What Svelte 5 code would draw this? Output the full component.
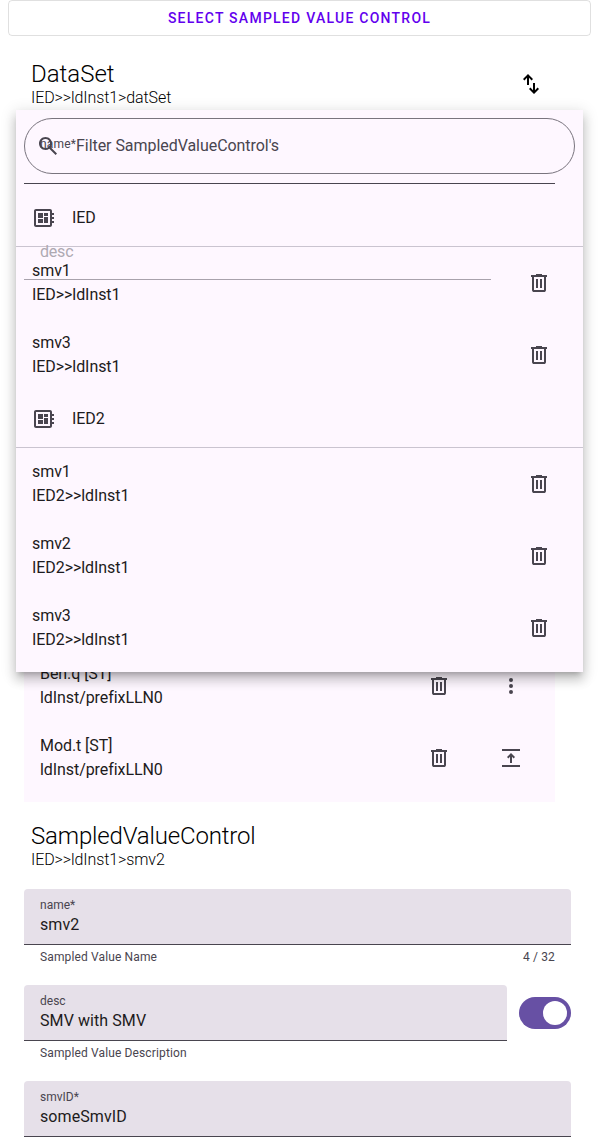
<script>
  const groups = [
    { ied: 'IED', controls: ['smv1', 'smv3'] },
    { ied: 'IED2', controls: ['smv1', 'smv2', 'smv3'] }
  ];
  const fcdas = [
    { name: 'Beh.q [ST]', action: 'more' },
    { name: 'Mod.t [ST]', action: 'moveUp' }
  ];
  const icons = {
    remove:
      'M7 21c-.55 0-1.02-.2-1.41-.59C5.2 20.02 5 19.55 5 19V6H4V4h5V3h6v1h5v2h-1v13c0 .55-.2 1.02-.59 1.41-.39.39-.86.59-1.41.59H7ZM17 6H7v13h10V6ZM9 17h2V8H9v9Zm4 0h2V8h-2v9Z',
    board:
      'M22 9V7h-2V5c0-1.1-.9-2-2-2H4c-1.1 0-2 .9-2 2v14c0 1.1.9 2 2 2h14c1.1 0 2-.9 2-2v-2h2v-2h-2v-2h2v-2h-2V9h2zm-4 10H4V5h14v14zM6 13h5v4H6zm6-6h4v3h-4zM6 7h5v5H6zm6 4h4v6h-4z',
    swap:
      'M8 13V5.825L5.425 8.4 4 7l5-5 5 5-1.425 1.4L10 5.825V13Zm7 9-5-5 1.425-1.4L14 18.175V11h2v7.175l2.575-2.575L20 17Z',
    search:
      'M19.6 21l-6.3-6.3A6.1 6.1 0 0 1 9.5 16C5.9 16 3 13.1 3 9.5S5.9 3 9.5 3 16 5.9 16 9.5c0 1.4-.5 2.8-1.3 3.8l6.3 6.3L19.6 21zM9.500 14A4.500 4.500 0 1 0 9.500 5a4.500 4.500 0 0 0 0 9z',
    more:
      'M12 20a2 2 0 1 1 0-4 2 2 0 0 1 0 4Zm0-6a2 2 0 1 1 0-4 2 2 0 0 1 0 4Zm0-6a2 2 0 1 1 0-4 2 2 0 0 1 0 4Z',
    moveUp:
      'M3 3h18v2H3zM3 19h18v2H3zM11 17v-6.200l-1.600 1.600L8 11l4-4 4 4-1.400 1.400L13 10.800V17z'
  };
</script>

{#snippet icon(name)}
  <svg class="icon" viewBox="0 0 24 24" width="24" height="24" aria-hidden="true"><path d={icons[name]} /></svg>
{/snippet}

<div class="page">
  <button class="select">Select Sampled Value Control</button>

  <section class="dataset">
    <header class="head">
      <div>
        <h2>DataSet</h2>
        <p class="path">IED&gt;&gt;ldInst1&gt;datSet</p>
      </div>
      <span class="swap">{@render icon('swap')}</span>
    </header>
    <div class="plain"><span class="float">name*</span></div>
    <div class="plain disabled"><span class="rest">desc</span></div>
    <ul class="fcdas">
      {#each fcdas as fcda}
        <li class="row">
          <div class="lines"><span>{fcda.name}</span><span>ldInst/prefixLLN0</span></div>
          <span class="act">{@render icon('remove')}</span>
          <span class="act">{@render icon(fcda.action)}</span>
        </li>
      {/each}
    </ul>
  </section>

  <section class="control">
    <h2>SampledValueControl</h2>
    <p class="path">IED&gt;&gt;ldInst1&gt;smv2</p>
    <div class="form">
      <div>
        <div class="filled"><span class="label">name*</span><span class="value">smv2</span></div>
        <div class="support"><span>Sampled Value Name</span><span>4 / 32</span></div>
      </div>
      <div class="nullable">
        <div class="grow">
          <div class="filled"><span class="label">desc</span><span class="value">SMV with SMV</span></div>
          <div class="support"><span>Sampled Value Description</span></div>
        </div>
        <span class="switch"><span class="knob"></span></span>
      </div>
      <div class="filled"><span class="label">smvID*</span><span class="value">someSmvID</span></div>
    </div>
  </section>

  <div class="menu">
    <div class="search">{@render icon('search')}<span>Filter SampledValueControl's</span></div>
    {#each groups as group}
      <div class="group">{@render icon('board')}<span>{group.ied}</span></div>
      {#each group.controls as control}
        <div class="row">
          <div class="lines"><span>{control}</span><span>{group.ied}&gt;&gt;ldInst1</span></div>
          <span class="act">{@render icon('remove')}</span>
        </div>
      {/each}
    {/each}
  </div>
</div>

<style>
  :global(body) {
    margin: 0;
    background: #fff;
  }
  .page {
    position: relative;
    box-sizing: border-box;
    height: 1144px;
    overflow: hidden;
    padding: 0 8px;
    font-family: Roboto, sans-serif;
    font-size: 16px;
    line-height: 24px;
    color: #1d1b20;
  }
  .icon {
    display: block;
    flex: none;
    fill: #49454f;
  }
  .select {
    display: block;
    box-sizing: border-box;
    width: 100%;
    height: 36px;
    padding: 0;
    border: 1px solid rgba(0, 0, 0, 0.12);
    border-radius: 4px;
    background: none;
    font: 500 14px/34px Roboto, sans-serif;
    letter-spacing: 1.25px;
    text-transform: uppercase;
    color: #6200ee;
  }
  h2,
  .path {
    margin: 0;
    padding-left: 7px;
    font-weight: 300;
    color: #000;
  }
  h2 {
    font-size: 24px;
    line-height: 28px;
  }
  .control h2 {
    letter-spacing: -0.16px;
  }
  .path {
    font-size: 16px;
    line-height: 19px;
    letter-spacing: -0.09px;
  }
  .dataset {
    width: 531px;
    margin: 24px 0 0 16px;
  }
  .head {
    display: flex;
    justify-content: space-between;
    height: 68px;
  }
  .head .icon {
    fill: #000;
  }
  .swap {
    padding: 12px 12px 0 0;
  }
  .plain {
    position: relative;
    z-index: 2;
    box-sizing: border-box;
    height: 56px;
    padding: 0 16px;
    border-bottom: 1px solid #49454f;
    color: #49454f;
  }
  .plain.disabled {
    width: 467px;
    margin-top: 40px;
    border-color: #a8a2ac;
    color: #aea9b2;
  }
  .float {
    display: block;
    padding-top: 8px;
    font-size: 12px;
    line-height: 16px;
    letter-spacing: 0.15px;
  }
  .rest {
    display: block;
    line-height: 56px;
    letter-spacing: -0.2px;
  }
  .fcdas {
    margin: 362px 0 0;
    padding: 8px 0;
    list-style: none;
    background: #fef7ff;
  }
  .row {
    display: flex;
    align-items: center;
    box-sizing: border-box;
    height: 72px;
    padding: 0 20px 0 16px;
  }
  .lines {
    display: flex;
    flex: 1;
    flex-direction: column;
    letter-spacing: -0.07px;
  }
  .act {
    padding: 12px;
  }
  .act + .act {
    margin-left: 24px;
  }
  .control {
    margin: 20px 20px 0 16px;
  }
  .form {
    display: flex;
    flex-direction: column;
    gap: 16px;
    margin-top: 20px;
  }
  .filled {
    display: flex;
    flex-direction: column;
    box-sizing: border-box;
    height: 56px;
    padding: 8px 16px;
    border-bottom: 1px solid #49454f;
    border-radius: 4px 4px 0 0;
    background: #e6e0e9;
  }
  .label {
    font-size: 12px;
    line-height: 16px;
    color: #49454f;
  }
  .value {
    letter-spacing: 0.08px;
  }
  .support {
    display: flex;
    justify-content: space-between;
    padding: 4px 16px 0;
    height: 20px;
    font-size: 12px;
    line-height: 16px;
    letter-spacing: 0.13px;
    color: #49454f;
  }
  .nullable {
    display: flex;
    gap: 12px;
  }
  .grow {
    flex: 1;
  }
  .switch {
    display: flex;
    align-items: center;
    justify-content: flex-end;
    box-sizing: border-box;
    width: 52px;
    height: 32px;
    margin-top: 12px;
    padding: 4px;
    border-radius: 16px;
    background: #6750a4;
  }
  .knob {
    width: 24px;
    height: 24px;
    border-radius: 50%;
    background: #fff;
  }
  .menu {
    position: absolute;
    z-index: 1;
    top: 110px;
    left: 16px;
    box-sizing: border-box;
    width: 567px;
    padding: 8px 0;
    background: #fef7ff;
    box-shadow:
      0 5px 5px -3px rgba(0, 0, 0, 0.2),
      0 8px 10px 1px rgba(0, 0, 0, 0.14),
      0 3px 14px 2px rgba(0, 0, 0, 0.12);
  }
  .search {
    display: flex;
    align-items: center;
    gap: 16px;
    box-sizing: border-box;
    height: 56px;
    margin: 0 8px 16px;
    padding: 0 11px;
    border: 1px solid #79747e;
    border-radius: 28px;
    letter-spacing: -0.05px;
    color: #49454f;
  }
  .group {
    display: flex;
    align-items: center;
    gap: 16px;
    height: 56px;
    padding: 0 16px;
    border-bottom: 1px solid #cac4d0;
    letter-spacing: -0.07px;
  }
</style>
